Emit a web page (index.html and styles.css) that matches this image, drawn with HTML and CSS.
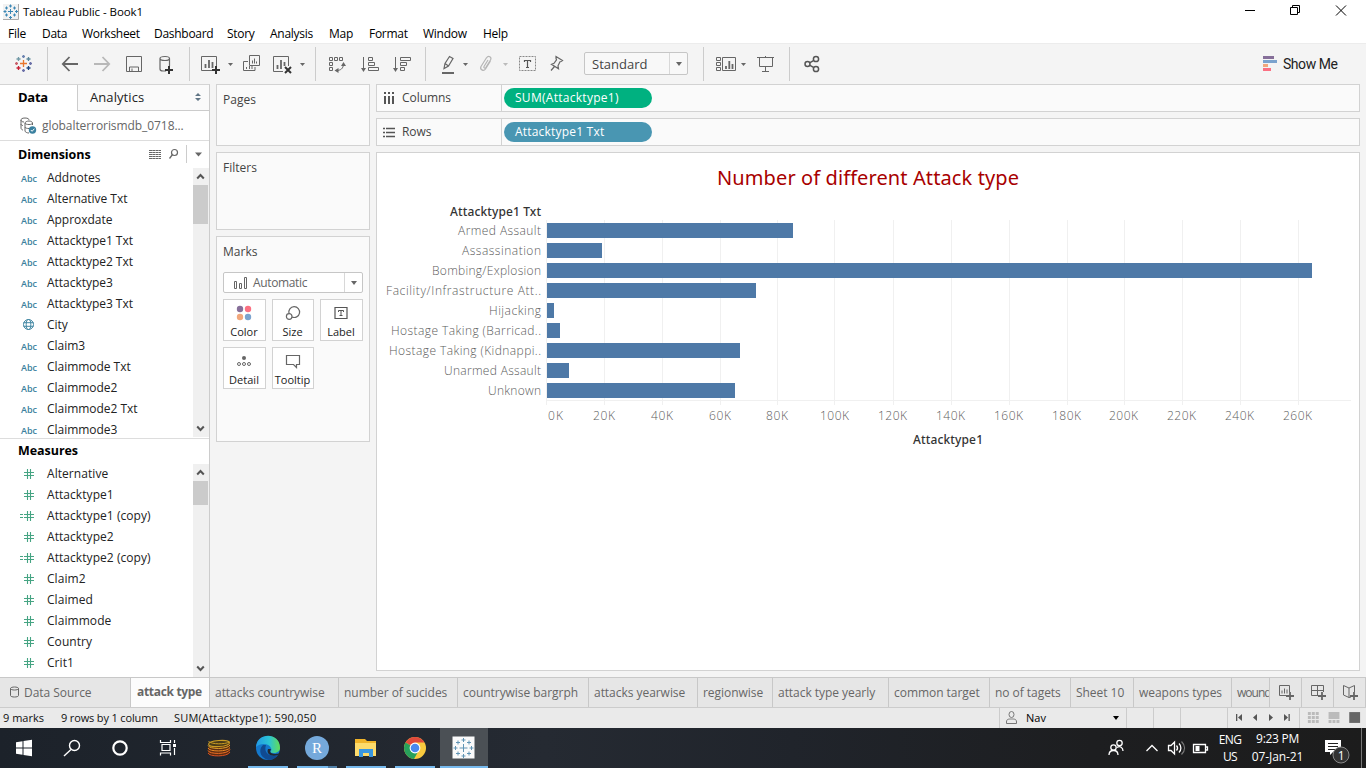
FILE: index.html
```html
<!DOCTYPE html>
<html lang="en">
<head>
<meta charset="utf-8">
<title>Tableau Public - Book1</title>
<link rel="stylesheet" href="styles.css">
</head>
<body>
<svg class="defs" aria-hidden="true">
  <symbol id="hash" viewBox="0 0 18 12"><path d="M7.500 1v10M10.500 1v10M4 4.500h10M4 7.500h10" stroke="#46a483" stroke-width="1.100" fill="none"/></symbol>
  <symbol id="calc" viewBox="0 0 18 12"><path d="M7.500 1v10M10.500 1v10M4 4.500h10M4 7.500h10M0 4.500h3M0 7.500h3" stroke="#46a483" stroke-width="1.100" fill="none"/></symbol>
  <symbol id="up" viewBox="0 0 16 17"><path d="M4.200 10.500L7.500 7l3.300 3.500" stroke="#555" stroke-width="2" fill="none"/></symbol>
  <symbol id="down" viewBox="0 0 16 17"><path d="M4.200 6.500L7.500 10l3.300-3.500" stroke="#555" stroke-width="2" fill="none"/></symbol>
</svg>
<div class="window">
  <header class="titlebar">
    <svg class="appicon" width="16" height="16" viewBox="0 0 16 16"><rect width="15" height="15" fill="#f2f2f2"/><path d="M0 15.500h15.500V0" stroke="#aaa" fill="none"/><path d="M7.500 5v5M5 7.500h5M7.500 0.500v3M6 2h3M7.500 12v3M6 13.500h3M0.500 7.500h3M2 6v3M12 7.500h3M13.500 6v3M3.500 2.500v3M2 4h3M11.500 2.500v3M10 4h3M3.500 9.500v3M2 11h3M11.500 9.500v3M10 11h3" stroke="#3b87b5" fill="none"/></svg>
    <span class="apptitle">Tableau Public - Book1</span>
    <svg class="wincontrols" width="138" height="22" viewBox="1228 0 138 22"><path d="M1245 10.500h10M1290.500 7.500h7v7h-7zM1292.500 7v-1.500h7v7h-1.500M1336 5.500l10 10M1346 5.500l-10 10" stroke="#000" fill="none"/></svg>
  </header>
  <nav class="menu"><span>File</span><span>Data</span><span>Worksheet</span><span>Dashboard</span><span>Story</span><span>Analysis</span><span>Map</span><span>Format</span><span>Window</span><span>Help</span></nav>
  <div class="toolbar">
    <div class="tools logo">
      <svg width="47" height="40" viewBox="0 44 47 40" fill="none" stroke-width="1.300"><path d="M23.500 60v7M20 63.500h7" stroke="#e8762c"/><path d="M18.500 57v4M16.500 59h4" stroke="#7199a6"/><path d="M28.500 57v4M26.500 59h4" stroke="#5b879b"/><path d="M23.500 55v3M22 56.500h3" stroke="#6b83b0"/><path d="M16.500 62v3M15 63.500h3" stroke="#c9606a"/><path d="M30.500 62v3M29 63.500h3M23.500 69v3M22 70.500h3" stroke="#6b70a8"/><path d="M18.500 66v4M16.500 68h4" stroke="#c72035"/><path d="M28.500 66v4M26.500 68h4" stroke="#1f457e"/></svg>
    </div>
    <div class="tools history">
      <svg width="38" height="40" viewBox="48 44 38 40"><path d="M78 64H63M69.500 57L62.800 64l6.700 7" stroke="#666" stroke-width="1.800" fill="none"/></svg>
      <svg width="32" height="40" viewBox="86 44 32 40"><path d="M94 64h15M102.500 57l6.700 7-6.700 7" stroke="#b8b8b8" stroke-width="1.800" fill="none"/></svg>
      <svg width="32" height="40" viewBox="118 44 32 40"><path d="M126.500 56.500h15v15h-15zM129.500 71v-4h9v4M132 68.500v3" stroke="#666" fill="none"/></svg>
      <svg width="39" height="40" viewBox="150 44 39 40"><path d="M166 71h-3c-2 0-3-1-3-2V58.500M169.500 58.500V66M160 58.500c0-1.300 2-2 5-2s4.500 .7 4.500 2-1.500 2-4.500 2-5-.7-5-2z" stroke="#666" fill="none" stroke-width="1.200"/><path d="M169 66v8M165 70h8" stroke="#333" stroke-width="2"/></svg>
    </div>
    <div class="tools sheets">
      <svg width="47" height="40" viewBox="190 44 47 40"><path d="M212 70.500h-10.500v-14h15V66" stroke="#666" fill="none"/><path d="M205.500 68v-4M209 68v-8M212.500 68v-6" stroke="#666" stroke-width="1.800"/><path d="M216 66v8M212 70h8" stroke="#333" stroke-width="2"/><path d="M228 63h5l-2.500 3z" fill="#666"/></svg>
      <svg width="31" height="40" viewBox="237 44 31 40"><path d="M249.500 55.500h10v10h-10zM248 61.500h-4.500v9h11.500V67" stroke="#666" fill="none"/><path d="M252.500 63.500v-3M254.500 63.500v-5M256.500 63.500v-2M246.500 69v-2M249.500 69v-3M252 69v-3" stroke="#666"/></svg>
      <svg width="47" height="40" viewBox="268 44 47 40"><path d="M283 71.500h-9.500v-15h15V66" stroke="#666" fill="none"/><path d="M277.500 69v-4M281 69v-9M284.500 66v-4" stroke="#666" stroke-width="1.800"/><path d="M285 67l6 6M291 67l-6 6" stroke="#333" stroke-width="2"/><path d="M300 63h5l-2.500 3z" fill="#666"/></svg>
    </div>
    <div class="tools sorting">
      <svg width="37" height="40" viewBox="316 44 37 40" fill="none" stroke="#666"><path d="M329.500 57.500h3v3h-3zM334.500 57.500h3v3h-3zM339.500 57.500h3v3h-3zM329.500 62.500h3v3h-3zM329.500 67.500h3v3h-3zM336 70.500c5 0 7-2 7.500-6"/><path d="M341 66l2.500-4 2.500 4zM338.500 68l-4 2.500 4 2.500z" fill="#666" stroke="none"/></svg>
      <svg width="33" height="40" viewBox="353 44 33 40" fill="none" stroke="#666"><path d="M363.500 57v13M368.500 57.500h4v3h-4zM368.500 62.500h6v3h-6zM368.500 67.500h10v3h-10z"/><path d="M361 68h5l-2.500 4z" fill="#666" stroke="none"/></svg>
      <svg width="39" height="40" viewBox="386 44 39 40" fill="none" stroke="#666"><path d="M395.500 57v13M400.500 57.500h10v3h-10zM400.500 62.500h6v3h-6zM400.500 67.500h4v3h-4z"/><path d="M393 68h5l-2.500 4z" fill="#666" stroke="none"/></svg>
    </div>
    <div class="tools marking">
      <svg width="46" height="40" viewBox="426 44 46 40"><path d="M444 68.500l1-5 4.500-7 3.500 2-4.500 7.500zM445 63.500l3.500 2.500" stroke="#666" stroke-width="1.200" fill="none"/><path d="M442 73h12" stroke="#666" stroke-width="2"/><path d="M463 63h5l-2.500 3z" fill="#666"/></svg>
      <svg width="40" height="40" viewBox="472 44 40 40"><path d="M488 60l-4 6.500c-.7 1.300 1 2.200 1.800 1l4.700-7.500c1.600-3-2-5-4-2.200l-5.500 8.700c-1.500 3 2.500 5.200 4.500 2.500l5-8" stroke="#b5b5b5" stroke-width="1.200" fill="none"/><path d="M503 63h5l-2.500 3z" fill="#bbb"/></svg>
      <svg width="31" height="40" viewBox="512 44 31 40"><path d="M519.500 56.500h16v14h-16z" stroke="#888" stroke-dasharray="2 1" fill="none"/><path d="M524.500 62v-1.500h6V62M527.500 60.500v7M526 67.500h3" stroke="#555" stroke-width="1.200" fill="none"/></svg>
      <svg width="41" height="40" viewBox="543 44 41 40"><path d="M556 56.500l6.500 4-1.500 1-1 .3-2 4 .5 3-7-4.500 2.500-1 2.500-3.500-.5-1.500zM554.500 66.500l-3.500 4" stroke="#666" stroke-width="1.200" fill="none"/></svg>
      <div class="combo fit"><span>Standard</span><i></i></div>
    </div>
    <div class="tools present">
      <svg width="46" height="40" viewBox="704 44 46 40" fill="none" stroke="#666"><path d="M716.500 57.500h4v3h-4zM716.500 62.500h4v3h-4zM716.500 67.500h4v3h-4zM722.500 57.500h13v13h-13z"/><path d="M726 69v-3M729.300 69v-8M732.500 69v-5" stroke-width="1.800"/><path d="M741 63h5l-2.500 3z" fill="#666" stroke="none"/></svg>
      <svg width="39" height="40" viewBox="750 44 39 40" fill="none" stroke="#666"><path d="M757 57.500h17M759.500 57.500v9h13v-9M765.500 67v4.500M762 71.500h7M765.500 56v1"/></svg>
    </div>
    <div class="tools share">
      <svg width="36" height="40" viewBox="790 44 36 40" fill="none" stroke="#555" stroke-width="1.500"><circle cx="807.500" cy="64" r="2.500"/><circle cx="816" cy="59" r="2.600"/><circle cx="816" cy="69" r="2.600"/><path d="M810 62.600l3.500-2M810 65.400l3.500 2"/></svg>
    </div>
    <div class="showme"><svg width="14" height="15"><path d="M0 0h11v3H0z" fill="#866f99"/><path d="M0 4h14v3H0z" fill="#7ba3ce"/><path d="M0 8h5v3H0z" fill="#f1a77c"/><path d="M0 12h8v3H0z" fill="#fb7082"/></svg><span>Show Me</span></div>
  </div>

  <main class="workspace">
    <aside class="datapane">
      <div class="panetabs"><div class="panetab on">Data</div><div class="panetab">Analytics<svg width="8" height="10"><path d="M1 4l3-3 3 3zM1 6h6L4 9z" fill="#607585"/></svg></div></div>
      <div class="source"><svg width="18" height="18" viewBox="0 0 18 18" fill="none" stroke="#666"><path d="M9 3c0-1-1-2-4-2S1 2 1 3s1 2 3 2M1 3v8c0 1 1 2 2 2M1 7c0 1 1 1.500 2 1.500M5 6c0-1 2-2 4-2s3.500 1 3.500 2-1.500 1.500-3.500 1.500S5 7 5 6zM5 6v8c0 1 2 2 4 2M12.500 6v2M5 10c0 1 2 1.500 4 1.500"/><circle cx="12.500" cy="13" r="3.700" fill="#3b81a0" stroke="none"/><path d="M10.800 13l1.300 1.300 2.300-2.600" stroke="#fff"/></svg><span>globalterrorismdb_0718...</span></div>
      <div class="sechead"><h2>Dimensions</h2>
        <svg width="60" height="27" viewBox="149 0 60 27" fill="none"><path d="M149 9.500h12M149 11.500h12M149 13.500h12M149 15.500h12M149 17.500h12" stroke="#666" stroke-dasharray="3 .300"/><circle cx="174.500" cy="11.500" r="3" stroke="#666" stroke-width="1.200"/><path d="M172.500 13.500l-3 4" stroke="#666" stroke-width="1.300"/><path d="M186.500 4v18" stroke="#ccc"/><path d="M195 11.500h7l-3.500 4z" fill="#666"/></svg>
      </div>
      <div class="fieldbox dims">
        <ul>
          <li><b>Abc</b>Addnotes</li><li><b>Abc</b>Alternative Txt</li><li><b>Abc</b>Approxdate</li><li><b>Abc</b>Attacktype1 Txt</li><li><b>Abc</b>Attacktype2 Txt</li><li><b>Abc</b>Attacktype3</li><li><b>Abc</b>Attacktype3 Txt</li>
          <li><svg class="globe" width="13" height="13" viewBox="0 0 13 13" fill="none" stroke="#4187a3"><circle cx="6.500" cy="6.500" r="5"/><ellipse cx="6.500" cy="6.500" rx="2.300" ry="5"/><path d="M1.500 4.700h10M1.500 8.300h10"/></svg>City</li>
          <li><b>Abc</b>Claim3</li><li><b>Abc</b>Claimmode Txt</li><li><b>Abc</b>Claimmode2</li><li><b>Abc</b>Claimmode2 Txt</li><li><b>Abc</b>Claimmode3</li>
        </ul>
        <div class="scroll"><svg width="16" height="17"><use href="#up"/></svg><div class="thumb"></div><svg class="end" width="16" height="17"><use href="#down"/></svg></div>
      </div>
      <div class="sechead meas"><h2>Measures</h2></div>
      <div class="fieldbox measures">
        <ul>
          <li><svg width="18" height="12"><use href="#hash"/></svg>Alternative</li><li><svg width="18" height="12"><use href="#hash"/></svg>Attacktype1</li><li><svg width="18" height="12"><use href="#calc"/></svg>Attacktype1 (copy)</li><li><svg width="18" height="12"><use href="#hash"/></svg>Attacktype2</li><li><svg width="18" height="12"><use href="#calc"/></svg>Attacktype2 (copy)</li><li><svg width="18" height="12"><use href="#hash"/></svg>Claim2</li><li><svg width="18" height="12"><use href="#hash"/></svg>Claimed</li><li><svg width="18" height="12"><use href="#hash"/></svg>Claimmode</li><li><svg width="18" height="12"><use href="#hash"/></svg>Country</li><li><svg width="18" height="12"><use href="#hash"/></svg>Crit1</li>
        </ul>
        <div class="scroll"><svg width="16" height="17"><use href="#up"/></svg><div class="thumb"></div><svg class="end" width="16" height="17"><use href="#down"/></svg></div>
      </div>
    </aside>

    <section class="cards">
      <div class="card pages">Pages</div>
      <div class="card filters">Filters</div>
      <div class="card marks">Marks
        <div class="combo marktype"><svg width="14" height="14" fill="none" stroke="#666"><path d="M.5 5.500h2v7h-2zM5.500 7.500h2v5h-2zM10.500 1.500h2v11h-2z"/></svg><span>Automatic</span><i></i></div>
        <div class="markgrid">
          <div><svg width="16" height="16"><circle cx="4" cy="4" r="3.200" fill="#866f99"/><circle cx="12" cy="4" r="3.200" fill="#fb7082"/><circle cx="4" cy="12" r="3.200" fill="#f1a77c"/><circle cx="12" cy="12" r="3.200" fill="#7ba3ce"/></svg>Color</div>
          <div><svg width="16" height="16" fill="none" stroke="#666" stroke-width="1.200"><path d="M4 8.500A5.400 5.400 0 1 1 7 12"/><circle cx="4.200" cy="11.500" r="2.800"/></svg>Size</div>
          <div><svg width="16" height="16" fill="none" stroke="#555"><path d="M2 2.500h12v11H2z" stroke-width="1.200"/><path d="M5.500 7V5.500h5V7M8 5.500v5M6.500 10.500h3"/></svg>Label</div>
          <div><svg width="16" height="16" fill="none" stroke="#666"><circle cx="8" cy="5" r="2" fill="#666" stroke="none"/><circle cx="3" cy="11" r="1.500"/><circle cx="8" cy="11" r="1.500"/><circle cx="13" cy="11" r="1.500"/></svg>Detail</div>
          <div><svg width="16" height="16" fill="none" stroke="#666" stroke-width="1.200"><path d="M1.500 2.500h13v9h-3v3l-3-3h-7z"/></svg>Tooltip</div>
        </div>
      </div>
    </section>

    <section class="sheet">
      <div class="shelf"><div class="shelfname"><svg width="12" height="13" stroke="#555" stroke-width="2"><path d="M2 0v2M6 0v2M10 0v2M2 4v8M6 4v8M10 4v8"/></svg>Columns</div><div class="pill green">SUM(Attacktype1)</div></div>
      <div class="shelf"><div class="shelfname"><svg width="12" height="13" stroke="#555" stroke-width="1.700"><path d="M0 2.500h2M0 6.500h2M0 10.500h2M3 2.500h9M3 6.500h9M3 10.500h9"/></svg>Rows</div><div class="pill blue">Attacktype1 Txt</div></div>
      <div class="view">
        <svg class="chart" width="982" height="517" viewBox="377 153 982 517">
          <text class="title" x="717" y="185" textLength="302">Number of different Attack type</text>
          <path class="grid" d="M546.500 220v185M604.500 220v185M662.500 220v185M720.500 220v185M777.500 220v185M834.500 220v185M893.500 220v185M951.500 220v185M1009.500 220v185M1067.500 220v185M1124.500 220v185M1182.500 220v185M1240.500 220v185M1298.500 220v185M546 400.500h805"/>
          <g class="bars"><path d="M547 223h246v15H547zM547 243h55v15h-55zM547 263h765v15H547zM547 283h209v15H547zM547 303h7v15h-7zM547 323h13v15h-13zM547 343h193v15H547zM547 363h22v15h-22zM547 383h188v15H547z"/></g>
          <text class="strong" x="450" y="216" textLength="91">Attacktype1 Txt</text>
          <g class="labels">
            <text x="458" y="235" textLength="83">Armed Assault</text><text x="462" y="255" textLength="79">Assassination</text><text x="432" y="275" textLength="109">Bombing/Explosion</text><text x="386" y="295" textLength="155">Facility/Infrastructure Att..</text><text x="489" y="315" textLength="52">Hijacking</text><text x="391" y="335" textLength="150">Hostage Taking (Barricad..</text><text x="389" y="355" textLength="152">Hostage Taking (Kidnappi..</text><text x="444" y="375" textLength="97">Unarmed Assault</text><text x="488" y="395" textLength="53">Unknown</text>
            <text x="548" y="420" textLength="15">0K</text><text x="593" y="420" textLength="22">20K</text><text x="651" y="420" textLength="22">40K</text><text x="709" y="420" textLength="22">60K</text><text x="766" y="420" textLength="22">80K</text><text x="820" y="420" textLength="29">100K</text><text x="878" y="420" textLength="29">120K</text><text x="936" y="420" textLength="29">140K</text><text x="994" y="420" textLength="29">160K</text><text x="1052" y="420" textLength="29">180K</text><text x="1109" y="420" textLength="29">200K</text><text x="1167" y="420" textLength="29">220K</text><text x="1225" y="420" textLength="29">240K</text><text x="1283" y="420" textLength="29">260K</text>
          </g>
          <text class="strong" x="913" y="444" textLength="70">Attacktype1</text>
        </svg>
      </div>
    </section>
  </main>

  <div class="tabs">
    <div class="dsource"><svg width="9" height="12" fill="none" stroke="#666"><path d="M.5 2.500c0-2 8-2 8 0v7c0 2-8 2-8 0zM.5 2.500c0 2 8 2 8 0"/></svg>Data Source</div>
    <div class="on">attack type</div><div>attacks countrywise</div><div>number of sucides</div><div>countrywise bargrph</div><div>attacks yearwise</div><div>regionwise</div><div>attack type yearly</div><div>common target</div><div>no of tagets</div><div>Sheet 10</div><div>weapons types</div><div class="last">wound</div>
    <div class="add"><svg width="17" height="16" fill="none" stroke="#666"><path d="M8 10.500H1.500v-10h10V7"/><path d="M4 8.500v-3M6.500 8.500v-5M9 8.500v-4"/><path d="M12 7v8M8 11h8" stroke-width="1.800"/></svg></div>
    <div class="add"><svg width="17" height="16" fill="none" stroke="#666"><path d="M8 10.500H1.500v-10h12V7M1.500 5.500h12M7.500 .5v10"/><path d="M12 7v8M8 11h8" stroke-width="1.800"/></svg></div>
    <div class="add"><svg width="17" height="16" fill="none" stroke="#666"><path d="M7 3L1.500 .5v9.500L7 12.500zM7 3l5.500-2.500V7M7 12.500L9 12"/><path d="M12 7v8M8 11h8" stroke-width="1.800"/></svg></div>
  </div>
  <div class="status">
    <span class="s1">9 marks</span><span class="s2">9 rows by 1 column</span><span class="s3">SUM(Attacktype1): 590,050</span>
    <div class="nav"><svg width="11" height="14" fill="none" stroke="#777"><ellipse cx="5.500" cy="3.500" rx="2.500" ry="3"/><path d="M.5 12.500V11c0-3 2-3 5-3s5 0 5 3v1.500z"/></svg><span>Nav</span><i></i></div><div class="blank"></div><div class="blank"></div><div class="blank wide"></div>
    <svg width="71" height="20" viewBox="1228 708 71 20" fill="#555"><path d="M1236 714h1.300v7H1236zM1242 714v7l-4-3.500zM1257 714v7l-4-3.500zM1269 714v7l4-3.500zM1284 714v7l4-3.500zM1288.500 714h1.300v7h-1.300z"/></svg>
    <svg class="modes" width="67" height="20" viewBox="1299 708 67 20"><path d="M1307 712h3v3h-3zM1311 712h3v3h-3zM1315 712h3v3h-3zM1307 716h3v3h-3zM1311 716h3v3h-3zM1315 716h3v3h-3zM1307 720h3v3h-3zM1311 720h3v3h-3zM1315 720h3v3h-3zM1328 712h11v7h-11zM1328 720h3v3h-3zM1332 720h3v3h-3zM1336 720h3v3h-3z" fill="#bbb"/><path d="M1349 712h11v11h-11z" fill="#666"/></svg>
  </div>

  <footer class="taskbar">
    <svg width="48" height="40" viewBox="0 728 48 40" fill="#fff"><path d="M16 742.200l6.500-1v6.300H16zM23.500 741l8.500-1.200v7.700h-8.500zM16 748.500h6.500v6.300l-6.500-1zM23.500 748.500H32v7.700l-8.500-1.200z"/></svg>
    <svg width="48" height="40" viewBox="48 728 48 40" fill="none" stroke="#fff" stroke-width="1.400"><circle cx="74.500" cy="745.500" r="5"/><path d="M71 749.500l-7 6.500"/></svg>
    <svg width="48" height="40" viewBox="96 728 48 40" fill="none" stroke="#fff" stroke-width="2.200"><circle cx="120" cy="748" r="6.700"/></svg>
    <svg width="49" height="40" viewBox="144 728 49 40" fill="none" stroke="#fff" stroke-width="1.200"><path d="M160.500 740v2.500h10V740M162 744.500h8v6h-8zM160.500 755.500v-2.500h10v2.500M174.500 740v3M174.500 748v7"/><path d="M173 744h3v3h-3z" fill="#fff" stroke="none"/></svg>
    <svg width="50" height="40" viewBox="193 728 50 40" fill="none"><path d="M208 747l22-5v10c-1 5-21 5-22 0z" fill="#5c2c12"/><ellipse cx="219" cy="743.500" rx="10.500" ry="3" transform="rotate(-4 219 743.500)" fill="#4a3b18" stroke="#c99c24"/><path d="M208.500 741.500c4 3 16 3 21 .5" stroke="#c99c24"/><path d="M208 745.500c1 4 20 4 22-.5" stroke="#e0a52a"/><path d="M208 748c1 4 20 4 22-.5" stroke="#ec8b28"/><path d="M208 750.500c1 4 20 4 22-1" stroke="#ee7024"/><path d="M208 753c1 4 20 4 22-1" stroke="#dd5220"/></svg>
    <svg class="run" width="49" height="40" viewBox="243 728 49 40"><defs><linearGradient id="eg"><stop stop-color="#2298e5"/><stop offset=".55" stop-color="#2bc4d5"/><stop offset="1" stop-color="#63dd55"/></linearGradient></defs><circle cx="268" cy="748" r="12" fill="#1478cc"/><path d="M256 747c1-15 24-15 24 1 0 5-7 6-10 4 1-1 2-2 1-4-2-5-11-5-15-1z" fill="url(#eg)"/><path d="M263 745c-6 6-1 14 6 15 4 0 8-3 9-5-7 2-15-1-12-10z" fill="#104a91"/><path d="M271 749c-1 2-1 3 0 4 3 1.500 7 1 8.500 0l-1.500 2c-7 2-12-1-10-6z" fill="#222831"/><path class="line" d="M248 766h40v2h-40z"/></svg>
    <svg width="49" height="40" viewBox="292 728 49 40"><circle cx="317" cy="748" r="12" fill="#75a9db"/><text class="rglyph" x="317" y="753" text-anchor="middle">R</text><path class="line" d="M297 766h31v2h-31z"/><path d="M328 766h9v2h-9z" fill="#5180a8"/></svg>
    <svg width="49" height="40" viewBox="341 728 49 40"><path d="M355 739h10l2 2h9v15h-21z" fill="#f0b429"/><path d="M355 743h21v13h-21z" fill="#fddb6b"/><path d="M359 757v-8h14v8h-4v-4h-6v4z" fill="#3996df"/><path class="line" d="M346 766h40v2h-40z"/></svg>
    <svg width="50" height="40" viewBox="390 728 50 40"><circle cx="415" cy="748" r="11" fill="#f9ca3e"/><path d="M415 748l-9.500-5.500A11 11 0 0 1 424.500 742.500h-9z" fill="#df4a3c"/><path d="M405.500 742.500A11 11 0 0 0 414 759l5-9-4-2z" fill="#27a15b"/><circle cx="415" cy="748" r="5.400" fill="#fff"/><circle cx="415" cy="748" r="4.300" fill="#4889ef"/><path class="line" d="M395 766h40v2h-40z"/></svg>
    <svg class="active" width="48" height="40" viewBox="440 728 48 40"><path d="M452.500 736.500h22v22h-22z" fill="#fafafa"/><path d="M463.500 744v8M459.500 748h8M463.500 738v4M461.500 740h4M463.500 754v4M461.500 756h4M455.500 746v4M453.500 748h4M471.500 746v4M469.500 748h4M458 740.500v4M456 742.500h4M469 740.500v4M467 742.500h4M458 751.500v4M456 753.500h4M469 751.500v4M467 753.500h4" stroke="#6094b4" fill="none"/><path class="line" d="M440 766h48v2h-48z"/></svg>
    <div class="tray">
      <svg width="118" height="40" viewBox="1100 728 118 40" fill="none" stroke="#fff" stroke-width="1.300"><circle cx="1113.500" cy="747.500" r="2.700"/><path d="M1109 755c0-6 9-6 9 0"/><circle cx="1119.500" cy="743" r="2.700"/><path d="M1117 747.500c3-2 6 0 6 3.500M1146.500 751l5.500-5.500 5.500 5.500M1168.500 745.500h2.500l3.500-3.500v12l-3.500-3.500h-2.500zM1176.500 745.500c1.300 1.500 1.300 3.500 0 5M1179 743.500c2.500 2.500 2.500 6.500 0 9"/><path d="M1181.500 741.500c4 4 4 9 0 13" stroke="#777"/><path d="M1193.500 744.500h12v8h-12zM1206 747h1.500v3h-1.500"/><path d="M1195.500 746h4v5h-4z" fill="#fff" stroke="none"/></svg>
      <div class="lang"><span>ENG</span><span>US</span></div>
      <div class="clock"><span>9:23 PM</span><span>07-Jan-21</span></div>
      <svg width="52" height="40" viewBox="1314 728 52 40"><path d="M1325 740h16v12h-8l-3 3v-3h-5z" fill="#fff"/><path d="M1328 743.500h10M1328 746.500h10M1328 749.500h7" stroke="#222"/><circle cx="1341" cy="755" r="8" fill="#333" stroke="#888"/><text class="count" x="1341" y="759.500" text-anchor="middle">1</text><path d="M1361.500 728v40" stroke="#777"/></svg>
    </div>
  </footer>
</div>
</body>
</html>
```
FILE: styles.css
```css
* { box-sizing: border-box; }
body { margin: 0; font: 12px/16px "Open Sans", "Noto Sans", sans-serif; color: #222; }
.defs { display: none; }
svg { display: block; flex: none; }
.window { width: 1366px; height: 768px; display: flex; flex-direction: column; overflow: hidden; background: #f4f4f4; white-space: nowrap; }
.titlebar { height: 22px; flex: none; background: #fff; display: flex; align-items: center; padding-left: 3px; color: #000; }
.appicon { margin-top: 1px; }
.apptitle { margin-left: 4px; font-size: 11.500px; letter-spacing: -.06px; flex: 1; padding-top: 1px; }
.menu { height: 21px; flex: none; background: #fff; display: grid; grid-template-columns: 34px 40px 72px 73px 43px 59px 40px 54px 60px 60px; padding: 4px 0 0 8px; color: #000; letter-spacing: -.28px; }
.toolbar { height: 41px; flex: none; display: flex; border-top: 1px solid #ececec; }
.tools { display: flex; height: 40px; }
.tools + .tools::before { content: ""; width: 1px; height: 34px; margin-top: 3px; background: #ccc; }
.combo { display: flex; align-items: center; border: 1px solid #c6c6c6; background: #f8f8f8; border-radius: 2px; }
.combo span { flex: 1; }
.combo i { width: 18px; height: 100%; border-left: 1px solid #d8d8d8; display: grid; place-items: center; }
.combo i::after, .nav i::after { content: ""; border: solid transparent; border-width: 4px 3.500px 0; border-top-color: #666; }
.fit { width: 104px; height: 23px; margin: 8px 15px 0 0; color: #444; font-size: 13px; letter-spacing: .02px; padding-left: 7px; }
.showme { margin-left: auto; width: 103px; display: flex; align-items: center; gap: 6px; font: 14px Roboto, sans-serif; letter-spacing: -.45px; color: #222; padding-bottom: 1px; }

.workspace { height: 593px; flex: none; display: flex; }
.datapane { width: 210px; height: 593px; background: #fff; border-right: 1px solid #ccc; border-top: 1px solid #d4d4d4; display: flex; flex-direction: column; }
.panetabs { display: flex; height: 26px; flex: none; font-size: 13px; }
.panetab { width: 132px; border-left: 1px solid #ccc; border-bottom: 1px solid #ccc; background: #fafafa; padding: 4px 7px 0 12px; display: flex; justify-content: space-between; letter-spacing: .08px; }
.panetab svg { margin-top: 3px; }
.panetab.on { width: 77px; border: 0; background: #fff; padding-left: 18px; font-weight: 700; letter-spacing: -.3px; color: #000; }
.source { height: 30px; flex: none; border-bottom: 1px solid #ddd; display: flex; align-items: center; padding-left: 20px; gap: 4px; color: #666; letter-spacing: -.07px; }
.sechead { height: 27px; flex: none; display: flex; align-items: center; justify-content: space-between; }
.sechead h2 { margin: 0 0 0 18px; font: 700 12.500px/16px "Open Sans", sans-serif; letter-spacing: -.05px; color: #000; }
.sechead.meas { border-top: 1px solid #ddd; height: 26px; padding-bottom: 2px; }
.fieldbox { display: flex; justify-content: space-between; overflow: hidden; flex: none; height: 270px; }
.measures { height: 213px; }
.fieldbox ul { margin: -1px 0 0; padding: 0; list-style: none; letter-spacing: -.03px; }
.measures ul { letter-spacing: .06px; }
.fieldbox li { height: 21px; display: flex; align-items: center; padding-left: 21px; }
.fieldbox li b { width: 26px; font-size: 9px; font-weight: 600; color: #3b7f9d; padding-top: 2px; letter-spacing: 0; }
.fieldbox li svg { margin-right: 9px; margin-left: -1px; }
.fieldbox li svg.globe { margin: 0 12px 0 1px; }
.scroll { width: 16px; background: #f0f0f0; display: flex; flex-direction: column; height: 269px; }
.measures .scroll { height: 213px; }
.thumb { height: 39px; width: 15px; background: #cbcbcb; }
.measures .thumb { height: 24px; }
.scroll .end { margin-top: auto; }

.cards { width: 154px; margin-left: 6px; display: flex; flex-direction: column; gap: 6px; color: #444; flex: none; }
.card { border: 1px solid #d2d2d2; background: #fafafa; padding: 7px 6px; letter-spacing: .02px; }
.pages { height: 62px; }
.filters { height: 78px; }
.marks { height: 206px; }
.marktype { height: 21px; margin-top: 12px; padding-left: 10px; background: #fff; color: #666; gap: 5px; letter-spacing: -.42px; }
.marktype { letter-spacing: -.35px; }
.markgrid { display: grid; grid-template-columns: 43px 42px 43px; grid-auto-rows: 42px; gap: 6px; margin-top: 6px; color: #222; font-size: 11px; line-height: 14px; }
.markgrid div { border: 1px solid #d2d2d2; background: #fff; display: flex; flex-direction: column; align-items: center; padding: 5px 1px 0 0; gap: 4px; }

.sheet { width: 984px; margin-left: 6px; display: flex; flex-direction: column; gap: 6px; flex: none; }
.shelf { height: 28px; border: 1px solid #d2d2d2; background: #fafafa; display: flex; align-items: center; flex: none; }
.shelfname { width: 125px; height: 26px; border-right: 1px solid #d2d2d2; display: flex; align-items: center; gap: 7px; padding-left: 6px; color: #444; letter-spacing: -.05px; }
.pill { width: 148px; height: 20px; margin-left: 2px; border-radius: 10px; color: #fff; padding: 2px 11px; letter-spacing: .2px; }
.green { background: #00b180; letter-spacing: .28px; }
.blue { background: #4996b2; }
.view { height: 519px; border: 1px solid #d2d2d2; background: #fff; }
.chart text { font: 12px "Noto Sans", sans-serif; fill: #333; }
.chart .labels text { font: 300 12px "Open Sans", "Noto Sans", sans-serif; fill: #5c5c5c; }
.chart .title { font-size: 20px; fill: #a80000; }
.chart .strong { font-weight: 500; }
.grid { stroke: #f0f0f0; fill: none; }
.bars { fill: #4e79a7; }

.tabs { height: 31px; flex: none; border-top: 1px solid #c8c8c8; border-bottom: 1px solid #ccc; background: #e6e6e6; display: grid; grid-template-columns: 131px 79px 129px 119px 131px 109px 75px 116px 101px 81px 63px 98px 38px 32px 32px 32px; color: #666; letter-spacing: -.04px; }
.tabs div { border-right: 1px solid #c8c8c8; overflow: hidden; padding: 7px 0 0 5px; }
.tabs .dsource { display: flex; gap: 5px; padding-left: 10px; }
.tabs .last { letter-spacing: -1px; }
.dsource svg { margin-top: 1px; }
.tabs .on { background: #fcfcfc; font-weight: 700; padding-left: 6px; padding-top: 6px; letter-spacing: -.32px; }
.tabs .add { padding: 7px 0 0 8px; }
.status { height: 20px; flex: none; display: flex; background: #eaeaea; font-size: 11px; line-height: 20px; padding-left: 3px; color: #111; }
.s1 { width: 58px; }
.s2 { width: 113px; letter-spacing: -.15px; }
.s3 { flex: 1; letter-spacing: .21px; }
.nav { width: 127px; border-left: 1px solid #ccc; display: flex; align-items: center; padding-left: 6px; gap: 9px; color: #000; }
.nav i { margin-left: auto; margin-right: 7px; display: grid; }
.nav i::after { border-top-color: #000; }
.blank { width: 27px; border-left: 1px solid #ccc; }
.blank.wide { width: 48px; border-right: 1px solid #ccc; }
.modes { border-left: 1px solid #ccc; }
.taskbar { height: 40px; flex: none; display: flex; background: linear-gradient(90deg, #1c222a, #252a32 40%, #20242b 58%, #1d1e20 80%, #1c1c1c); }
.line { fill: #76b9ed; }
.active { background: #4b5055; }
.rglyph { font: 15px "Liberation Serif", serif; fill: #fff; }
.tray { margin-left: auto; display: flex; color: #fff; letter-spacing: -.3px; }
.lang, .clock { display: flex; flex-direction: column; align-items: center; padding-top: 3px; line-height: 17px; }
.lang { width: 24px; letter-spacing: -.6px; }
.clock { width: 72px; padding-top: 2px; line-height: 18px; padding-right: 1px; }
.clock span:last-child { letter-spacing: -.1px; }
.count { font: 12px "Open Sans", sans-serif; fill: #fff; }
```
